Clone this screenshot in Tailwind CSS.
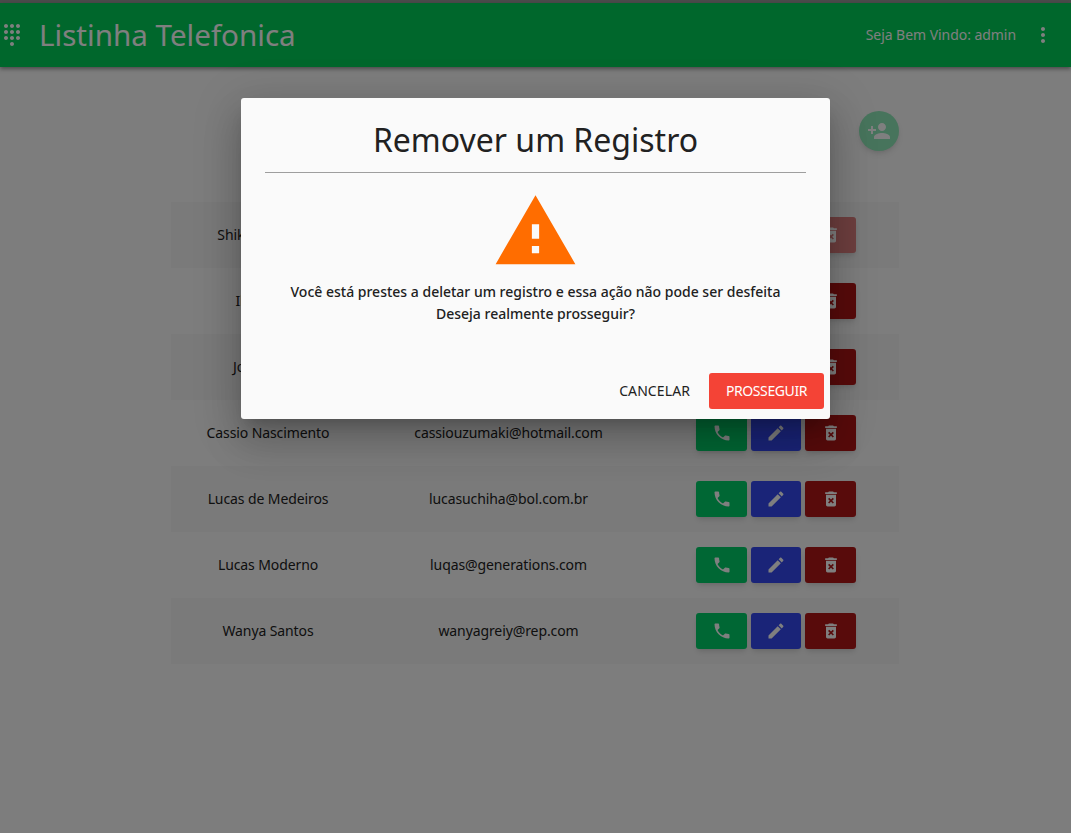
<!DOCTYPE html>
<html lang="pt">
<head>
<meta charset="utf-8">
<script src="https://cdn.jsdelivr.net/npm/@tailwindcss/browser@4"></script>
<title>Listinha Telefonica</title>
</head>
<body class="bg-[#fafafa] font-['Noto_Sans',sans-serif] text-[#212121]">
<div class="relative h-[833px] w-[1071px] overflow-hidden">
  <div class="h-[3px] bg-[#4b4b4b]"></div>
  <header class="flex h-16 items-center bg-[#00ce58] text-white shadow-[0_2px_4px_rgba(0,0,0,0.4)]">
    <svg class="h-6 w-6 fill-current" viewBox="0 0 24 24"><path d="M12 19c-1.1 0-2 .9-2 2s.9 2 2 2 2-.9 2-2-.9-2-2-2zM6 1c-1.1 0-2 .9-2 2s.9 2 2 2 2-.9 2-2-.9-2-2-2zm0 6c-1.1 0-2 .9-2 2s.9 2 2 2 2-.9 2-2-.9-2-2-2zm0 6c-1.1 0-2 .9-2 2s.9 2 2 2 2-.9 2-2-.9-2-2-2zm12-8c1.1 0 2-.9 2-2s-.9-2-2-2-2 .9-2 2 .9 2 2 2zm-6 8c-1.1 0-2 .9-2 2s.9 2 2 2 2-.9 2-2-.9-2-2-2zm6 0c-1.1 0-2 .9-2 2s.9 2 2 2 2-.9 2-2-.9-2-2-2zm0-6c-1.1 0-2 .9-2 2s.9 2 2 2 2-.9 2-2-.9-2-2-2zm-6 0c-1.1 0-2 .9-2 2s.9 2 2 2 2-.9 2-2-.9-2-2-2zm0-6c-1.1 0-2 .9-2 2s.9 2 2 2 2-.9 2-2-.9-2-2-2z"/></svg>
    <span class="ml-[15px] text-[29.6px] leading-none">Listinha Telefonica</span>
    <span class="ml-auto text-sm tracking-[-0.05px]">Seja Bem Vindo: admin</span>
    <svg class="ml-[15px] mr-[16px] h-6 w-6 fill-current" viewBox="0 0 24 24"><path d="M12 8c1.1 0 2-.9 2-2s-.9-2-2-2-2 .9-2 2 .9 2 2 2zm0 2c-1.1 0-2 .9-2 2s.9 2 2 2 2-.9 2-2-.9-2-2-2zm0 6c-1.1 0-2 .9-2 2s.9 2 2 2 2-.9 2-2-.9-2-2-2z"/></svg>
  </header>

  <main class="ml-[171px] w-[728px]">
    <div class="mt-[44px] flex justify-end">
      <button class="flex h-10 w-10 items-center justify-center rounded-full bg-[#8ee8b8] text-white shadow-md">
        <svg class="h-6 w-6 fill-current" viewBox="0 0 24 24"><path d="M15 12c2.21 0 4-1.79 4-4s-1.79-4-4-4-4 1.79-4 4 1.79 4 4 4zm-9-2V7H4v3H1v2h3v3h2v-3h3v-2H6zm9 4c-2.67 0-8 1.34-8 4v2h16v-2c0-2.66-5.33-4-8-4z"/></svg>
      </button>
    </div>
    <div class="mt-[51px] text-sm tracking-[-0.1px]">
      <div class="grid h-[66px] grid-cols-[194px_287px_247px] items-center bg-black/[0.02]">
        <span class="text-center">Shikamaru Dias</span><span class="text-center">shikamaru@konoha.com</span>
        <div class="ml-[44px] flex gap-1">
          <button class="flex h-9 w-[51px] items-center justify-center rounded-[3px] bg-[#00ce68] text-white shadow-md"><svg class="h-5 w-5 fill-current" viewBox="0 0 24 24"><path d="M6.62 10.79c1.44 2.83 3.76 5.14 6.59 6.59l2.2-2.2c.27-.27.67-.36 1.02-.24 1.12.37 2.33.57 3.57.57.55 0 1 .45 1 1V20c0 .55-.45 1-1 1-9.39 0-17-7.61-17-17 0-.55.45-1 1-1h3.5c.55 0 1 .45 1 1 0 1.25.2 2.45.57 3.57.11.35.03.74-.25 1.02l-2.2 2.2z"/></svg></button>
          <button class="flex h-9 w-[50px] items-center justify-center rounded-[3px] bg-[#3448f0] text-white shadow-md"><svg class="h-5 w-5 fill-current" viewBox="0 0 24 24"><path d="M3 17.25V21h3.75L17.81 9.94l-3.75-3.75L3 17.25zM20.71 7.04c.39-.39.39-1.02 0-1.41l-2.34-2.34c-.39-.39-1.02-.39-1.41 0l-1.83 1.83 3.75 3.75 1.83-1.83z"/></svg></button>
          <button class="flex h-9 w-[51px] items-center justify-center rounded-[3px] bg-[#dc7f7f] text-white shadow-md"><svg class="h-5 w-5 fill-current" viewBox="0 0 24 24"><path d="M6 19c0 1.1.9 2 2 2h8c1.1 0 2-.9 2-2V7H6v12zm2.46-7.12l1.41-1.41L12 12.59l2.12-2.12 1.41 1.41L13.41 14l2.12 2.12-1.41 1.41L12 15.41l-2.12 2.12-1.41-1.41L10.59 14l-2.13-2.12zM15.5 4l-1-1h-5l-1 1H5v2h14V4z"/></svg></button>
        </div>
      </div>
      <div class="grid h-[66px] grid-cols-[194px_287px_247px] items-center">
        <span class="text-center">Ilana Silva</span><span class="text-center">ilana@konoha.com</span>
        <div class="ml-[44px] flex gap-1">
          <button class="flex h-9 w-[51px] items-center justify-center rounded-[3px] bg-[#00ce68] text-white shadow-md"><svg class="h-5 w-5 fill-current" viewBox="0 0 24 24"><path d="M6.62 10.79c1.44 2.83 3.76 5.14 6.59 6.59l2.2-2.2c.27-.27.67-.36 1.02-.24 1.12.37 2.33.57 3.57.57.55 0 1 .45 1 1V20c0 .55-.45 1-1 1-9.39 0-17-7.61-17-17 0-.55.45-1 1-1h3.5c.55 0 1 .45 1 1 0 1.25.2 2.45.57 3.57.11.35.03.74-.25 1.02l-2.2 2.2z"/></svg></button>
          <button class="flex h-9 w-[50px] items-center justify-center rounded-[3px] bg-[#3448f0] text-white shadow-md"><svg class="h-5 w-5 fill-current" viewBox="0 0 24 24"><path d="M3 17.25V21h3.75L17.81 9.94l-3.75-3.75L3 17.25zM20.71 7.04c.39-.39.39-1.02 0-1.41l-2.34-2.34c-.39-.39-1.02-.39-1.41 0l-1.83 1.83 3.75 3.75 1.83-1.83z"/></svg></button>
          <button class="flex h-9 w-[51px] items-center justify-center rounded-[3px] bg-[#b01717] text-white shadow-md"><svg class="h-5 w-5 fill-current" viewBox="0 0 24 24"><path d="M6 19c0 1.1.9 2 2 2h8c1.1 0 2-.9 2-2V7H6v12zm2.46-7.12l1.41-1.41L12 12.59l2.12-2.12 1.41 1.41L13.41 14l2.12 2.12-1.41 1.41L12 15.41l-2.12 2.12-1.41-1.41L10.59 14l-2.13-2.12zM15.5 4l-1-1h-5l-1 1H5v2h14V4z"/></svg></button>
        </div>
      </div>
      <div class="grid h-[66px] grid-cols-[194px_287px_247px] items-center bg-black/[0.02]">
        <span class="text-center">Jonas Lima</span><span class="text-center">jonas@konoha.com</span>
        <div class="ml-[44px] flex gap-1">
          <button class="flex h-9 w-[51px] items-center justify-center rounded-[3px] bg-[#00ce68] text-white shadow-md"><svg class="h-5 w-5 fill-current" viewBox="0 0 24 24"><path d="M6.62 10.79c1.44 2.83 3.76 5.14 6.59 6.59l2.2-2.2c.27-.27.67-.36 1.02-.24 1.12.37 2.33.57 3.57.57.55 0 1 .45 1 1V20c0 .55-.45 1-1 1-9.39 0-17-7.61-17-17 0-.55.45-1 1-1h3.5c.55 0 1 .45 1 1 0 1.25.2 2.45.57 3.57.11.35.03.74-.25 1.02l-2.2 2.2z"/></svg></button>
          <button class="flex h-9 w-[50px] items-center justify-center rounded-[3px] bg-[#3448f0] text-white shadow-md"><svg class="h-5 w-5 fill-current" viewBox="0 0 24 24"><path d="M3 17.25V21h3.75L17.81 9.94l-3.75-3.75L3 17.25zM20.71 7.04c.39-.39.39-1.02 0-1.41l-2.34-2.34c-.39-.39-1.02-.39-1.41 0l-1.83 1.83 3.75 3.75 1.83-1.83z"/></svg></button>
          <button class="flex h-9 w-[51px] items-center justify-center rounded-[3px] bg-[#b01717] text-white shadow-md"><svg class="h-5 w-5 fill-current" viewBox="0 0 24 24"><path d="M6 19c0 1.1.9 2 2 2h8c1.1 0 2-.9 2-2V7H6v12zm2.46-7.12l1.41-1.41L12 12.59l2.12-2.12 1.41 1.41L13.41 14l2.12 2.12-1.41 1.41L12 15.41l-2.12 2.12-1.41-1.41L10.59 14l-2.13-2.12zM15.5 4l-1-1h-5l-1 1H5v2h14V4z"/></svg></button>
        </div>
      </div>
      <div class="grid h-[66px] grid-cols-[194px_287px_247px] items-center">
        <span class="text-center">Cassio Nascimento</span><span class="text-center">cassiouzumaki@hotmail.com</span>
        <div class="ml-[44px] flex gap-1">
          <button class="flex h-9 w-[51px] items-center justify-center rounded-[3px] bg-[#00ce68] text-white shadow-md"><svg class="h-5 w-5 fill-current" viewBox="0 0 24 24"><path d="M6.62 10.79c1.44 2.83 3.76 5.14 6.59 6.59l2.2-2.2c.27-.27.67-.36 1.02-.24 1.12.37 2.33.57 3.57.57.55 0 1 .45 1 1V20c0 .55-.45 1-1 1-9.39 0-17-7.61-17-17 0-.55.45-1 1-1h3.5c.55 0 1 .45 1 1 0 1.25.2 2.45.57 3.57.11.35.03.74-.25 1.02l-2.2 2.2z"/></svg></button>
          <button class="flex h-9 w-[50px] items-center justify-center rounded-[3px] bg-[#3448f0] text-white shadow-md"><svg class="h-5 w-5 fill-current" viewBox="0 0 24 24"><path d="M3 17.25V21h3.75L17.81 9.94l-3.75-3.75L3 17.25zM20.71 7.04c.39-.39.39-1.02 0-1.41l-2.34-2.34c-.39-.39-1.02-.39-1.41 0l-1.83 1.83 3.75 3.75 1.83-1.83z"/></svg></button>
          <button class="flex h-9 w-[51px] items-center justify-center rounded-[3px] bg-[#b01717] text-white shadow-md"><svg class="h-5 w-5 fill-current" viewBox="0 0 24 24"><path d="M6 19c0 1.1.9 2 2 2h8c1.1 0 2-.9 2-2V7H6v12zm2.46-7.12l1.41-1.41L12 12.59l2.12-2.12 1.41 1.41L13.41 14l2.12 2.12-1.41 1.41L12 15.41l-2.12 2.12-1.41-1.41L10.59 14l-2.13-2.12zM15.5 4l-1-1h-5l-1 1H5v2h14V4z"/></svg></button>
        </div>
      </div>
      <div class="grid h-[66px] grid-cols-[194px_287px_247px] items-center bg-black/[0.02]">
        <span class="text-center">Lucas de Medeiros</span><span class="text-center">lucasuchiha@bol.com.br</span>
        <div class="ml-[44px] flex gap-1">
          <button class="flex h-9 w-[51px] items-center justify-center rounded-[3px] bg-[#00ce68] text-white shadow-md"><svg class="h-5 w-5 fill-current" viewBox="0 0 24 24"><path d="M6.62 10.79c1.44 2.83 3.76 5.14 6.59 6.59l2.2-2.2c.27-.27.67-.36 1.02-.24 1.12.37 2.33.57 3.57.57.55 0 1 .45 1 1V20c0 .55-.45 1-1 1-9.39 0-17-7.61-17-17 0-.55.45-1 1-1h3.5c.55 0 1 .45 1 1 0 1.25.2 2.45.57 3.57.11.35.03.74-.25 1.02l-2.2 2.2z"/></svg></button>
          <button class="flex h-9 w-[50px] items-center justify-center rounded-[3px] bg-[#3448f0] text-white shadow-md"><svg class="h-5 w-5 fill-current" viewBox="0 0 24 24"><path d="M3 17.25V21h3.75L17.81 9.94l-3.75-3.75L3 17.25zM20.71 7.04c.39-.39.39-1.02 0-1.41l-2.34-2.34c-.39-.39-1.02-.39-1.41 0l-1.83 1.83 3.75 3.75 1.83-1.83z"/></svg></button>
          <button class="flex h-9 w-[51px] items-center justify-center rounded-[3px] bg-[#b01717] text-white shadow-md"><svg class="h-5 w-5 fill-current" viewBox="0 0 24 24"><path d="M6 19c0 1.1.9 2 2 2h8c1.1 0 2-.9 2-2V7H6v12zm2.46-7.12l1.41-1.41L12 12.59l2.12-2.12 1.41 1.41L13.41 14l2.12 2.12-1.41 1.41L12 15.41l-2.12 2.12-1.41-1.41L10.59 14l-2.13-2.12zM15.5 4l-1-1h-5l-1 1H5v2h14V4z"/></svg></button>
        </div>
      </div>
      <div class="grid h-[66px] grid-cols-[194px_287px_247px] items-center">
        <span class="text-center">Lucas Moderno</span><span class="text-center">luqas@generations.com</span>
        <div class="ml-[44px] flex gap-1">
          <button class="flex h-9 w-[51px] items-center justify-center rounded-[3px] bg-[#00ce68] text-white shadow-md"><svg class="h-5 w-5 fill-current" viewBox="0 0 24 24"><path d="M6.62 10.79c1.44 2.83 3.76 5.14 6.59 6.59l2.2-2.2c.27-.27.67-.36 1.02-.24 1.12.37 2.33.57 3.57.57.55 0 1 .45 1 1V20c0 .55-.45 1-1 1-9.39 0-17-7.61-17-17 0-.55.45-1 1-1h3.5c.55 0 1 .45 1 1 0 1.25.2 2.45.57 3.57.11.35.03.74-.25 1.02l-2.2 2.2z"/></svg></button>
          <button class="flex h-9 w-[50px] items-center justify-center rounded-[3px] bg-[#3448f0] text-white shadow-md"><svg class="h-5 w-5 fill-current" viewBox="0 0 24 24"><path d="M3 17.25V21h3.75L17.81 9.94l-3.75-3.75L3 17.25zM20.71 7.04c.39-.39.39-1.02 0-1.41l-2.34-2.34c-.39-.39-1.02-.39-1.41 0l-1.83 1.83 3.75 3.75 1.83-1.83z"/></svg></button>
          <button class="flex h-9 w-[51px] items-center justify-center rounded-[3px] bg-[#b01717] text-white shadow-md"><svg class="h-5 w-5 fill-current" viewBox="0 0 24 24"><path d="M6 19c0 1.1.9 2 2 2h8c1.1 0 2-.9 2-2V7H6v12zm2.46-7.12l1.41-1.41L12 12.59l2.12-2.12 1.41 1.41L13.41 14l2.12 2.12-1.41 1.41L12 15.41l-2.12 2.12-1.41-1.41L10.59 14l-2.13-2.12zM15.5 4l-1-1h-5l-1 1H5v2h14V4z"/></svg></button>
        </div>
      </div>
      <div class="grid h-[66px] grid-cols-[194px_287px_247px] items-center bg-black/[0.02]">
        <span class="text-center">Wanya Santos</span><span class="text-center">wanyagreiy@rep.com</span>
        <div class="ml-[44px] flex gap-1">
          <button class="flex h-9 w-[51px] items-center justify-center rounded-[3px] bg-[#00ce68] text-white shadow-md"><svg class="h-5 w-5 fill-current" viewBox="0 0 24 24"><path d="M6.62 10.79c1.44 2.83 3.76 5.14 6.59 6.59l2.2-2.2c.27-.27.67-.36 1.02-.24 1.12.37 2.33.57 3.57.57.55 0 1 .45 1 1V20c0 .55-.45 1-1 1-9.39 0-17-7.61-17-17 0-.55.45-1 1-1h3.5c.55 0 1 .45 1 1 0 1.25.2 2.45.57 3.57.11.35.03.74-.25 1.02l-2.2 2.2z"/></svg></button>
          <button class="flex h-9 w-[50px] items-center justify-center rounded-[3px] bg-[#3448f0] text-white shadow-md"><svg class="h-5 w-5 fill-current" viewBox="0 0 24 24"><path d="M3 17.25V21h3.75L17.81 9.94l-3.75-3.75L3 17.25zM20.71 7.04c.39-.39.39-1.02 0-1.41l-2.34-2.34c-.39-.39-1.02-.39-1.41 0l-1.83 1.83 3.75 3.75 1.83-1.83z"/></svg></button>
          <button class="flex h-9 w-[51px] items-center justify-center rounded-[3px] bg-[#b01717] text-white shadow-md"><svg class="h-5 w-5 fill-current" viewBox="0 0 24 24"><path d="M6 19c0 1.1.9 2 2 2h8c1.1 0 2-.9 2-2V7H6v12zm2.46-7.12l1.41-1.41L12 12.59l2.12-2.12 1.41 1.41L13.41 14l2.12 2.12-1.41 1.41L12 15.41l-2.12 2.12-1.41-1.41L10.59 14l-2.13-2.12zM15.5 4l-1-1h-5l-1 1H5v2h14V4z"/></svg></button>
        </div>
      </div>
    </div>
  </main>

  <div class="absolute inset-x-0 bottom-0 top-[3px] bg-black/50"></div>

  <div class="absolute left-[241px] top-[98px] flex h-[321px] w-[589px] flex-col rounded-[3px] bg-[#fafafa] px-6 shadow-[0_11px_15px_-7px_rgba(0,0,0,0.2),0_24px_38px_3px_rgba(0,0,0,0.14),0_9px_46px_8px_rgba(0,0,0,0.12)]">
    <h2 class="h-[75px] border-b border-[#9e9e9e] pt-[19px] text-center text-[32px] leading-[46px]">Remover um Registro</h2>
    <svg class="mx-auto mt-[15px] h-[87px] w-[87px] shrink-0 fill-[#ff6d00]" viewBox="0 0 24 24"><path d="M1 21h22L12 2 1 21zm12-3h-2v-2h2v2zm0-4h-2v-4h2v4z"/></svg>
    <p class="mt-[6px] text-center text-sm font-medium leading-[22px]">Você está prestes a deletar um registro e essa ação não pode ser desfeita<br>Deseja realmente prosseguir?</p>
    <div class="absolute bottom-[10px] right-[6px] flex items-center gap-[3px]">
      <button class="h-9 rounded-[3px] px-4 text-sm tracking-[0.1px]">CANCELAR</button>
      <button class="h-9 w-[115px] rounded-[3px] bg-[#f44336] text-sm tracking-[-0.4px] text-white">PROSSEGUIR</button>
    </div>
  </div>
</div>
</body>
</html>
